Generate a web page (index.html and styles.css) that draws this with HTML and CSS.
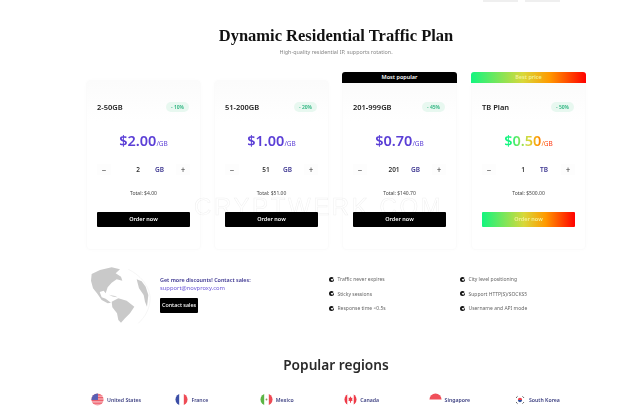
FILE: index.html
```html
<!DOCTYPE html>
<html lang="en">
<head>
  <meta charset="UTF-8">
  <meta name="viewport" content="width=device-width, initial-scale=1">
  <title>Dynamic Residential Traffic Plan</title>
  <link rel="stylesheet" href="styles.css">
</head>
<body>
  <div class="page">
    <!-- Top nav leftovers -->
    <div class="top-pills">
      <span class="pill"></span>
      <span class="pill"></span>
    </div>

    <h1>Dynamic Residential Traffic Plan</h1>
    <p class="sub">High-quality residential IP, supports rotation.</p>

    <!-- Plans -->
    <div class="plans">
      <div class="plan">
        <div class="plan-head"><span class="name">2-50GB</span><span class="off">- 10%</span></div>
        <div class="price">$2.00<small>/GB</small></div>
        <div class="stepper"><span class="btn">−</span><span class="qty">2</span><span class="unit">GB</span><span class="btn">+</span></div>
        <div class="total">Total: $4.00</div>
        <div class="order">Order now</div>
      </div>
      <div class="plan">
        <div class="plan-head"><span class="name">51-200GB</span><span class="off">- 20%</span></div>
        <div class="price">$1.00<small>/GB</small></div>
        <div class="stepper"><span class="btn">−</span><span class="qty">51</span><span class="unit">GB</span><span class="btn">+</span></div>
        <div class="total">Total: $51.00</div>
        <div class="order">Order now</div>
      </div>
      <div class="plan">
        <div class="tag">Most popular</div>
        <div class="plan-head"><span class="name">201-999GB</span><span class="off">- 45%</span></div>
        <div class="price">$0.70<small>/GB</small></div>
        <div class="stepper"><span class="btn">−</span><span class="qty">201</span><span class="unit">GB</span><span class="btn">+</span></div>
        <div class="total">Total: $140.70</div>
        <div class="order">Order now</div>
      </div>
      <div class="plan">
        <div class="tag rainbow">Best price</div>
        <div class="plan-head"><span class="name">TB Plan</span><span class="off">- 50%</span></div>
        <div class="price rainbow-text">$0.50<small>/GB</small></div>
        <div class="stepper"><span class="btn">−</span><span class="qty">1</span><span class="unit">TB</span><span class="btn">+</span></div>
        <div class="total">Total: $500.00</div>
        <div class="order rainbow">Order now</div>
      </div>
    </div>

    <!-- Contact + features -->
    <div class="extras">
      <svg class="globe" viewBox="9 15 192 180" aria-hidden="true">
        <path d="M130 28 C175 50 198 90 195 120 C193 150 180 170 160 190" fill="none" stroke="#ececec" stroke-width="1.500"/>
        <path fill="#c9c9c9" d="M20 42 L45 30 L80 22 L105 28 L92 40 L108 50 L112 62 L95 58 L80 68 L68 82 L62 100 L56 92 L44 96 L50 112 L62 116 L78 128 L68 130 L50 120 L36 100 L24 85 L18 62 Z"/>
        <path fill="#c9c9c9" d="M80 125 L100 115 L125 122 L148 140 L135 160 L120 175 L108 188 L100 180 L96 160 L82 142 Z"/>
        <path fill="#c9c9c9" d="M155 58 L170 64 L182 80 L190 105 L186 140 L180 125 L176 105 L162 85 Z"/>
        <path fill="#d2d2d2" d="M72 104 L90 108 L98 112 L84 110 Z"/>
      </svg>
      <div class="contact">
        <p class="contact-title">Get more discounts! Contact sales:</p>
        <p class="contact-mail">support@novproxy.com</p>
        <div class="contact-btn">Contact sales</div>
      </div>
      <ul class="features">
        <li>Traffic never expires</li>
        <li>Sticky sessions</li>
        <li>Response time &lt;0.5s</li>
      </ul>
      <ul class="features">
        <li>City level positioning</li>
        <li>Support HTTP(S)/SOCKS5</li>
        <li>Username and API mode</li>
      </ul>
    </div>

    <h2>Popular regions</h2>

    <!-- Regions -->
    <div class="regions">
      <div class="region">
        <svg class="flag" viewBox="0 0 14 14" aria-hidden="true"><defs><clipPath id="c1"><circle cx="7" cy="7" r="6.5"/></clipPath></defs><g clip-path="url(#c1)"><rect width="14" height="14" fill="#f4a6ac"/><path d="M0 2h14M0 5h14M0 8h14M0 11h14" stroke="#ef5f6c" stroke-width="1.2"/><rect width="7.5" height="7.5" fill="#5a5fb4"/></g></svg>
        <span>United States</span>
      </div>
      <div class="region">
        <svg class="flag" viewBox="0 0 14 14" aria-hidden="true"><defs><clipPath id="c2"><circle cx="7" cy="7" r="6.5"/></clipPath></defs><g clip-path="url(#c2)"><rect width="14" height="14" fill="#fff"/><rect width="4.5" height="14" fill="#3b4ea6"/><rect x="9.5" width="4.5" height="14" fill="#ee4b55"/></g></svg>
        <span>France</span>
      </div>
      <div class="region">
        <svg class="flag" viewBox="0 0 14 14" aria-hidden="true"><defs><clipPath id="c3"><circle cx="7" cy="7" r="6.5"/></clipPath></defs><g clip-path="url(#c3)"><rect width="14" height="14" fill="#fff"/><rect width="4.5" height="14" fill="#5cb545"/><rect x="9.5" width="4.5" height="14" fill="#ee4b55"/><circle cx="7" cy="7" r="1" fill="#8a9a5a"/></g></svg>
        <span>Mexico</span>
      </div>
      <div class="region">
        <svg class="flag" viewBox="0 0 14 14" aria-hidden="true"><defs><clipPath id="c4"><circle cx="7" cy="7" r="6.5"/></clipPath></defs><g clip-path="url(#c4)"><rect width="14" height="14" fill="#fff"/><rect width="3.5" height="14" fill="#ee3b48"/><rect x="10.5" width="3.5" height="14" fill="#ee3b48"/><path d="M7 3.500l1 2 1.200-.4-.5 2 .8.6-2 1.200V10.500h-1V8.900l-2-1.200.8-.6-.5-2 1.200.4z" fill="#ee3b48"/></g></svg>
        <span>Canada</span>
      </div>
      <div class="region">
        <svg class="flag" viewBox="0 0 14 14" aria-hidden="true"><defs><clipPath id="c5"><circle cx="7" cy="7" r="6.5"/></clipPath></defs><g clip-path="url(#c5)"><rect width="14" height="7" fill="#f0505a"/></g></svg>
        <span>Singapore</span>
      </div>
      <div class="region region-small">
        <svg class="flag" viewBox="0 0 14 14" aria-hidden="true"><circle cx="7" cy="7" r="6.500" fill="#fff"/><path d="M4 7a3 3 0 0 1 6 0z" fill="#e8404c"/><path d="M4 7a3 3 0 0 0 6 0z" fill="#33509e"/><path d="M1.500 4l2-2M1.500 10l2 2M10.500 2l2 2M10.500 12l2-2" stroke="#222" stroke-width="1.100"/></svg>
        <span>South Korea</span>
      </div>
    </div>

    <!-- Watermark -->
    <div class="watermark">CRYPTWERK.COM</div>
  </div>
</body>
</html>
```

FILE: styles.css
```css
* {box-sizing: border-box; margin: 0; padding: 0;}
body {
  background: #fff;
  color: #1c1c1c;
  font-family: "Noto Sans", sans-serif;
  overflow: hidden;
}
.page {
  position: relative;
  width: 640px;
  height: 417px;
  padding: 0 54px 0 86px;
  overflow: hidden;
  filter: blur(.35px);
}

/* Top pills */
.top-pills {display: flex; justify-content: flex-end; gap: 7px; height: 2px; padding-right: 26px;}
.pill {width: 35px; height: 2px; background: #efefef;}

/* Header */
h1 {
  margin-top: 23px;
  font-family: "Liberation Serif", serif;
  font-size: 16.500px;
  line-height: 22px;
  font-weight: 700;
  color: #111;
  text-align: center;
}
.sub {
  margin-top: 1px;
  font-size: 5.400px;
  line-height: 8px;
  color: #888;
  text-align: center;
}

/* Plan cards */
.plans {display: flex; gap: 13px; margin-top: 24px;}
.plan {
  position: relative;
  width: 115px;
  height: 170px;
  flex: none;
  padding: 20px 10px 0;
  border: 1px solid #fbfbfb;
  border-radius: 4px;
  box-shadow: 0 0 4px rgba(0, 0, 0, .015);
  background: linear-gradient(#fbfbfb, #fff 40px);
}
.plan:last-child {margin-left: 1px;}
.tag {
  position: absolute;
  top: -9px;
  left: -1px;
  right: -1px;
  height: 11px;
  border-radius: 3px 3px 0 0;
  background: #000;
  color: #fff;
  font-size: 5.500px;
  line-height: 11px;
  font-weight: 600;
  text-align: center;
}
.tag.rainbow, .order.rainbow {
  background: linear-gradient(90deg, #12f57f, #d8d83a 45%, #ff9a00 68%, #ff0000);
  color: #f4f29a;
}
.plan-head {display: flex; justify-content: space-between; align-items: center; height: 11px; padding-right: 1px;}
.name {font-size: 7.500px; font-weight: 600; color: #222;}
.off {
  padding: 0 5px;
  border-radius: 6px;
  background: #e8f8f0;
  color: #27b27c;
  font-size: 5px;
  line-height: 10px;
  font-weight: 600;
}
.price {
  margin-top: 18px;
  height: 20px;
  font-size: 14.500px;
  line-height: 20px;
  font-weight: 600;
  color: #5b3fd6;
  text-align: center;
}
.price small {font-size: 6.500px; font-weight: 400;}
.rainbow-text {
  background: linear-gradient(90deg, #12f57f 30%, #d8d83a 50%, #ff9a00 60%, #ff2a00 72%);
  -webkit-background-clip: text;
  background-clip: text;
  color: transparent;
}
.stepper {display: flex; align-items: center; margin-top: 12px; height: 14px; font-size: 6.500px; font-weight: 600;}
.btn {width: 14px; text-align: center; font-weight: 400; font-size: 8px; color: #333; background: #fdfdfd;}
.qty {width: 30px; margin-left: 12px; text-align: center; color: #333;}
.unit {flex: 1; padding-left: 2px; color: #3c3590;}
.total {margin-top: 13px; font-size: 5px; line-height: 8px; color: #444; text-align: center;}
.order {
  position: relative;
  z-index: 1;
  margin-top: 15px;
  height: 15px;
  border-radius: 1px;
  background: #000;
  color: #fff;
  font-size: 5.500px;
  line-height: 15px;
  font-weight: 600;
  text-align: center;
}

/* Contact and features */
.extras {display: flex; margin-top: 15px; height: 60px; margin-left: 2px;}
.globe {width: 64px; height: 60px; flex: none;}
.contact {width: 177px; flex: none; padding: 11px 0 0 8px;}
.contact-title {font-size: 5.400px; line-height: 8px; font-weight: 600; color: #3c3590;}
.contact-mail {font-size: 5.800px; line-height: 8px; color: #6a55d8;}
.contact-btn {
  width: fit-content;
  margin-top: 6px;
  padding: 0 2px;
  height: 14.500px;
  border-radius: 1px;
  background: #000;
  color: #fff;
  font-size: 5.400px;
  line-height: 14.500px;
  font-weight: 500;
}
.features {list-style: none; width: 131px; flex: none; padding-top: 9.300px;}
.features li {
  position: relative;
  height: 14.400px;
  padding-left: 8.500px;
  font-size: 5px;
  line-height: 10px;
  color: #666;
}
.features li::before {
  content: "";
  position: absolute;
  left: 0;
  top: 2.500px;
  width: 5px;
  height: 5px;
  border-radius: 50%;
  background: #111;
}
.features li::after {
  content: "";
  position: absolute;
  left: 1.500px;
  top: 3.500px;
  width: 2px;
  height: 1.200px;
  border-left: .6px solid #fff;
  border-bottom: .6px solid #fff;
  transform: rotate(-45deg);
}

/* Regions */
h2 {
  margin-top: 30px;
  font-size: 13.700px;
  line-height: 20px;
  font-weight: 600;
  color: #2a2a2a;
  text-align: center;
}
.regions {display: flex; margin-top: 18px; margin-left: 5px;}
.region {display: flex; align-items: center; gap: 3px; width: 84.400px; flex: none; font-size: 5.200px; font-weight: 600; color: #3c3f80;}
.flag {width: 13px; height: 13px; flex: none;}
.region-small {padding-left: 2px; gap: 4px;}
.region-small .flag {width: 10px; height: 10px;}

/* Watermark */
.watermark {
  position: absolute;
  left: 194px;
  top: 198px;
  font-family: "Liberation Sans", sans-serif;
  font-size: 24px;
  line-height: 18px;
  color: transparent;
  -webkit-text-stroke: .5px rgba(0, 0, 0, .07);
  letter-spacing: 2.600px;
}
```
